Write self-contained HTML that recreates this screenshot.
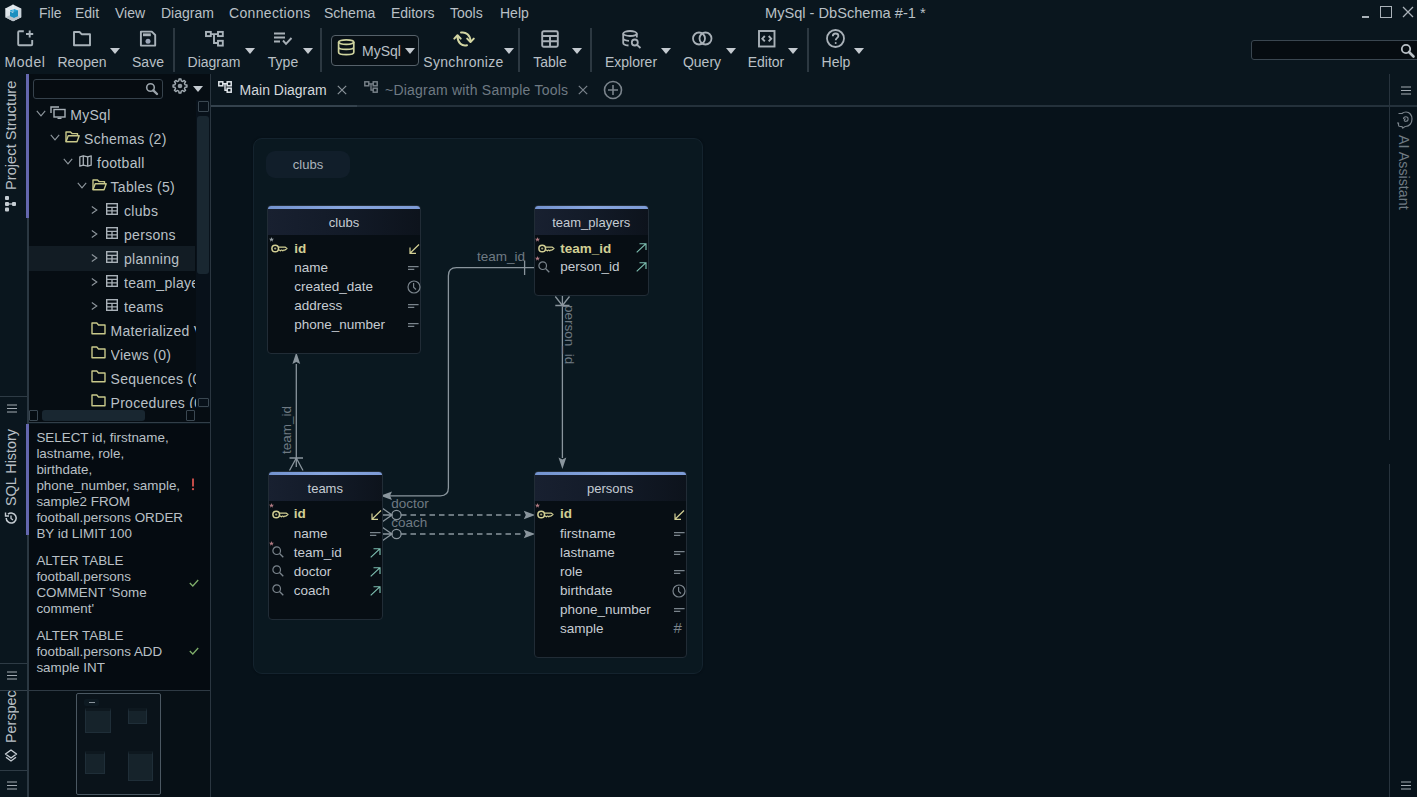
<!DOCTYPE html>
<html><head><meta charset="utf-8">
<style>
*{margin:0;padding:0;box-sizing:border-box}
html,body{width:1417px;height:797px;overflow:hidden;background:#0a161e;font-family:"Liberation Sans",sans-serif;color:#b9c0c6}
.a{position:absolute;white-space:nowrap}
svg{position:absolute;overflow:visible}
.mi{font-size:14px;top:4.5px;color:#b9c0c6}
.tl{font-size:14px;top:54px;line-height:16px;color:#b9c0c6}
.dd{position:absolute;width:0;height:0;border-left:5px solid transparent;border-right:5px solid transparent;border-top:6px solid #c4cad0}
.sep{position:absolute;width:1.8px;background:#2c3841;top:28px;height:44px}
</style></head><body>
<div id="root" style="position:absolute;left:0;top:0;width:1417px;height:797px">

<!-- MENU BAR -->
<svg style="left:0;top:0" width="26" height="25" viewBox="0 0 26 25">
<path d="M13 4.6L21.2 8.6V17.2L13 21.2L5.3 17.2V8.6Z" fill="#dfe5ea"/>
<path d="M13 12.6L21.2 8.6V17.2L13 21.2Z" fill="#c9d3db"/>
<path d="M5.3 17.2L13 21.2L21.2 17.2L13 14Z" fill="#b9c2c9"/>
<path d="M10 10.5L14.2 9L18 10.5V16L14 17.8L10 16Z" fill="#27a4d6"/>
<path d="M10 10.5L14.2 12L18 10.5V16L14 17.8L10 16Z" fill="#1c8fbf"/>
<path d="M13 4.6V12.6M5.3 8.6L13 12.6" stroke="#f4f7fa" stroke-width="0.6"/>
</svg>
<div class="a mi" style="left:39px">File</div>
<div class="a mi" style="left:75px">Edit</div>
<div class="a mi" style="left:115px">View</div>
<div class="a mi" style="left:161px">Diagram</div>
<div class="a mi" style="left:229px;letter-spacing:0.35px">Connections</div>
<div class="a mi" style="left:324px">Schema</div>
<div class="a mi" style="left:391px">Editors</div>
<div class="a mi" style="left:450px">Tools</div>
<div class="a mi" style="left:500px">Help</div>
<div class="a mi" style="left:765px;font-size:14.6px;top:4.6px">MySql - DbSchema #-1 *</div>
<!-- window controls -->
<div class="a" style="left:1362px;top:16px;width:7px;height:1.5px;background:#aab2b9"></div>
<div class="a" style="left:1380px;top:6px;width:12px;height:12px;border:1.5px solid #aab2b9"></div>
<svg style="left:1402px;top:6px" width="12" height="12"><path d="M1 1L11 11M11 1L1 11" stroke="#aab2b9" stroke-width="1.3"/></svg>

<!-- TOOLBAR -->
<div class="a tl" style="left:-25px;width:100px;text-align:center;letter-spacing:0.6px">Model</div>
<div class="a tl" style="left:32px;width:100px;text-align:center">Reopen</div>
<div class="a tl" style="left:98px;width:100px;text-align:center">Save</div>
<div class="a tl" style="left:164px;width:100px;text-align:center">Diagram</div>
<div class="a tl" style="left:233px;width:100px;text-align:center">Type</div>
<div class="a tl" style="left:413.5px;width:100px;text-align:center;letter-spacing:0.3px">Synchronize</div>
<div class="a tl" style="left:500px;width:100px;text-align:center">Table</div>
<div class="a tl" style="left:581px;width:100px;text-align:center">Explorer</div>
<div class="a tl" style="left:652px;width:100px;text-align:center">Query</div>
<div class="a tl" style="left:716px;width:100px;text-align:center">Editor</div>
<div class="a tl" style="left:786px;width:100px;text-align:center">Help</div>
<div class="dd" style="left:110.3px;top:48px;border-left-width:5px;border-right-width:5px"></div>
<div class="dd" style="left:244.5px;top:48px;border-left-width:5px;border-right-width:5px"></div>
<div class="dd" style="left:302.5px;top:48px;border-left-width:5px;border-right-width:5px"></div>
<div class="dd" style="left:503.8px;top:48px;border-left-width:5px;border-right-width:5px"></div>
<div class="dd" style="left:571.5px;top:48px;border-left-width:5px;border-right-width:5px"></div>
<div class="dd" style="left:661px;top:48px;border-left-width:5px;border-right-width:5px"></div>
<div class="dd" style="left:725.5px;top:48px;border-left-width:5px;border-right-width:5px"></div>
<div class="dd" style="left:788.3px;top:48px;border-left-width:5px;border-right-width:5px"></div>
<div class="dd" style="left:853.8px;top:48px;border-left-width:5px;border-right-width:5px"></div>
<div class="sep" style="left:173.2px"></div>
<div class="sep" style="left:320.4px"></div>
<div class="sep" style="left:518.1px"></div>
<div class="sep" style="left:590.1px"></div>
<div class="sep" style="left:806.8px"></div>
<!-- model icon -->
<svg style="left:16px;top:29px" width="19" height="19" viewBox="0 0 19 19"><path d="M7.8 2.2H3.2Q2.2 2.2 2.2 3.2V15.2Q2.2 16.2 3.2 16.2H15.2Q16.2 16.2 16.2 15.2V11" fill="none" stroke="#a9b3ba" stroke-width="1.9"/><path d="M13.7 1.4V8.4M10 5H17.2" stroke="#a9b3ba" stroke-width="1.9"/></svg>
<!-- reopen folder -->
<svg style="left:72px;top:30px" width="20" height="17" viewBox="0 0 20 17"><path d="M2 2H7.5L9.6 4.2H18V15.2H2Z" fill="none" stroke="#a9b3ba" stroke-width="1.9" stroke-linejoin="round"/></svg>
<!-- save -->
<svg style="left:139px;top:30px" width="18" height="17" viewBox="0 0 18 17"><path d="M1.9 1.6H12.8L16.2 5V15.6H1.9Z" fill="none" stroke="#a9b3ba" stroke-width="1.9" stroke-linejoin="round"/><rect x="4" y="3.4" width="7.8" height="2.8" fill="#a9b3ba"/><circle cx="9" cy="11.2" r="2.5" fill="#9ba6b8"/></svg>
<!-- diagram -->
<svg style="left:204px;top:30px" width="20" height="18" viewBox="0 0 20 18"><rect x="2" y="1.9" width="4.8" height="4.2" fill="none" stroke="#a9b3ba" stroke-width="1.9"/><rect x="14" y="1.9" width="4.8" height="4.2" fill="none" stroke="#a9b3ba" stroke-width="1.9"/><rect x="14" y="10.8" width="4.8" height="4.8" fill="none" stroke="#a9b3ba" stroke-width="1.9"/><path d="M6.8 4.1H14M10 4.1V13H14" fill="none" stroke="#a9b3ba" stroke-width="1.9"/></svg>
<!-- type -->
<svg style="left:273px;top:32px" width="20" height="14" viewBox="0 0 20 14"><path d="M1 1.5H12M1 5.5H12M1 9.5H7" stroke="#a9b1b8" stroke-width="1.9"/><path d="M10 8.5L13 11.8L18.5 6" fill="none" stroke="#a9b1b8" stroke-width="1.9"/></svg>
<!-- mysql combo -->
<div class="a" style="left:331px;top:35px;width:88px;height:31px;border:1.5px solid #56616a;border-radius:4px;background:#081016"></div>
<svg style="left:337px;top:39px" width="19" height="17" viewBox="0 0 19 17"><ellipse cx="9.2" cy="3.1" rx="7.6" ry="2.3" fill="none" stroke="#cfd39e" stroke-width="1.7"/><path d="M1.6 3.1V13.2C1.6 14.6 5 15.6 9.2 15.6S16.8 14.6 16.8 13.2V3.1M1.6 8C1.6 9.4 5 10.4 9.2 10.4S16.8 9.4 16.8 8" fill="none" stroke="#cfd39e" stroke-width="1.7"/></svg>
<div class="a" style="left:362px;top:42.5px;font-size:14px;line-height:16px;color:#b9c0c6">MySql</div>
<div class="dd" style="left:405px;top:48px;border-left-width:5px;border-right-width:5px"></div>
<!-- sync -->
<svg style="left:453px;top:30px" width="22" height="18" viewBox="0 0 22 18"><path d="M8 2.6C13 1.6 17.3 5 17.5 11.2M14 15.2C9 16.4 4.6 13 4.5 6.2" fill="none" stroke="#d3d6a3" stroke-width="2" stroke-linecap="round"/><path d="M14.2 8.6L17.5 12L20.8 8.6M1.3 8.6L4.5 5.2L7.7 8.6" fill="none" stroke="#d3d6a3" stroke-width="2" stroke-linecap="round" stroke-linejoin="round"/></svg>
<!-- table -->
<svg style="left:541px;top:30px" width="18" height="18" viewBox="0 0 18 18"><rect x="1.2" y="1.2" width="15.6" height="15.6" rx="1.5" fill="none" stroke="#a9b1b8" stroke-width="1.9"/><path d="M1.2 6H16.8M1.2 11.3H16.8M9 6V16.8" stroke="#a9b1b8" stroke-width="1.9"/></svg>
<!-- explorer -->
<svg style="left:622px;top:30px" width="20" height="19" viewBox="0 0 20 19"><ellipse cx="8" cy="3.5" rx="6.8" ry="2.5" fill="none" stroke="#a9b1b8" stroke-width="1.8"/><path d="M1.2 3.5V13C1.2 14.3 3.5 15.3 6.5 15.5M1.2 8.3C1.2 9.6 3.5 10.6 7 10.8M14.8 3.5V7.5" fill="none" stroke="#a9b1b8" stroke-width="1.8"/><circle cx="12.8" cy="12.5" r="3" fill="none" stroke="#a9b1b8" stroke-width="1.8"/><path d="M15 14.8L18.5 18" stroke="#a9b1b8" stroke-width="1.8"/></svg>
<!-- query -->
<svg style="left:692px;top:31px" width="21" height="15" viewBox="0 0 21 15"><circle cx="7" cy="7.5" r="6" fill="none" stroke="#a9b1b8" stroke-width="1.8"/><circle cx="13.5" cy="7.5" r="6" fill="none" stroke="#a9b1b8" stroke-width="1.8"/></svg>
<!-- editor -->
<svg style="left:758px;top:30px" width="18" height="18" viewBox="0 0 18 18"><rect x="1" y="1" width="15.5" height="15.5" fill="none" stroke="#a9b1b8" stroke-width="1.9"/><path d="M6.8 6L4.3 8.7L6.8 11.4M10.7 6L13.2 8.7L10.7 11.4" fill="none" stroke="#a9b1b8" stroke-width="1.9"/></svg>
<!-- help -->
<svg style="left:826px;top:29px" width="20" height="19" viewBox="0 0 20 19"><circle cx="9.5" cy="9.5" r="8.5" fill="none" stroke="#a9b1b8" stroke-width="1.8"/><path d="M6.8 7.2C6.8 5.5 8 4.5 9.6 4.5C11.2 4.5 12.4 5.5 12.4 7C12.4 8.8 9.7 9 9.7 11.3" fill="none" stroke="#a9b1b8" stroke-width="1.8"/><circle cx="9.7" cy="14" r="1" fill="#a9b1b8"/></svg>
<!-- search field -->
<div class="a" style="left:1251px;top:40px;width:170px;height:20px;border:1.3px solid #3a4650;border-radius:3px;background:#060c11"></div>
<svg style="left:1400px;top:43px" width="16" height="15" viewBox="0 0 16 15"><circle cx="6" cy="6" r="4.2" fill="none" stroke="#b9c0c6" stroke-width="1.8"/><path d="M9 9L13.5 13.5" stroke="#b9c0c6" stroke-width="2.6" stroke-linecap="round"/></svg>
<!-- CANVAS -->
<div class="a" style="left:211px;top:106.5px;width:1206px;height:691px;background:#07121a"></div>
<div class="a" style="left:252.5px;top:137.5px;width:450px;height:536px;border-radius:9px;background:#0a1820;border:1.5px solid #14232e;box-shadow:0 0 2px #060e14"></div>
<div class="a" style="left:266px;top:151px;width:84px;height:27px;border-radius:9px;background:#111e2a;text-align:center;font-size:13px;line-height:27px;color:#aab3bb">clubs</div>
<svg style="left:0;top:0" width="1417" height="797" viewBox="0 0 1417 797">
<g fill="none" stroke="#8a959d" stroke-width="1.3">
<path d="M296.3 364V467"/>
<path d="M289.5 458H303M296.3 458L289.5 470.5M296.3 458L303 470.5"/>
<path d="M534 267.7H456.4Q448.4 267.7 448.4 275.7V487.8Q448.4 495.8 440.4 495.8H390"/>
<path d="M524.6 260.5V275"/>
<path d="M562.4 296V458"/>
<path d="M555.3 305.5H569.5M562.4 305.5L555.3 296.5M562.4 305.5L569.5 296.5"/>
<path d="M382 515H392M382 508L392 515L382 522M382 534H392M382 527L392 534L382 541"/>
<circle cx="396.5" cy="515" r="4.6"/>
<circle cx="396.5" cy="534" r="4.6"/>
<path d="M401 515H524" stroke-dasharray="5.5 4" />
<path d="M401 534H524" stroke-dasharray="5.5 4" />
</g>
<g fill="#8a959d">
<path d="M296.3 352.3L292.4 364L296.3 362L300.2 364Z"/>
<path d="M380.4 495.8L392 491.6L390 495.8L392 500Z"/>
<path d="M562.4 469L558.5 457.5L562.4 459.5L566.3 457.5Z"/>
<path d="M535.2 515L523.8 510.8L525.8 515L523.8 519.2Z"/>
<path d="M535.2 534L523.8 529.8L525.8 534L523.8 538.2Z"/>
</g>
</svg>
<div class="a" style="left:477px;top:248.5px;font-size:13.5px;line-height:16px;color:#6f7a83">team_id</div>
<div class="a" style="left:391.2px;top:496px;font-size:13.5px;line-height:16px;color:#6f7a83">doctor</div>
<div class="a" style="left:391.2px;top:515px;font-size:13.5px;line-height:16px;color:#6f7a83">coach</div>
<div class="a" style="left:279px;top:454px;width:60px;height:16px;transform-origin:0 0;transform:rotate(-90deg);font-size:13.5px;line-height:16px;color:#6f7a83">team_id</div>
<div class="a" style="left:577px;top:305px;width:70px;height:16px;transform-origin:0 0;transform:rotate(90deg);font-size:13.5px;line-height:16px;color:#6f7a83">person_id</div>
<div class="a" style="left:267px;top:204.5px;width:154px;height:149px;border-radius:4px;background:#070e14;border:1px solid #212c36;overflow:hidden">
<div style="position:absolute;left:0;top:0;width:100%;height:3px;background:linear-gradient(90deg,#7393cf,#88a6df 50%,#7d9bd6)"></div>
<div style="position:absolute;left:0;top:3px;width:100%;height:26.5px;background:linear-gradient(90deg,#182030,#121a27 55%,#0d131c);text-align:center;font-size:13px;line-height:27px;color:#c5ccd3">clubs</div>
</div>
<div class="a" style="left:534px;top:204.5px;width:114.5px;height:91.5px;border-radius:4px;background:#070e14;border:1px solid #212c36;overflow:hidden">
<div style="position:absolute;left:0;top:0;width:100%;height:3px;background:linear-gradient(90deg,#7393cf,#88a6df 50%,#7d9bd6)"></div>
<div style="position:absolute;left:0;top:3px;width:100%;height:26.5px;background:linear-gradient(90deg,#182030,#121a27 55%,#0d131c);text-align:center;font-size:13px;line-height:27px;color:#c5ccd3">team_players</div>
</div>
<div class="a" style="left:268px;top:470.5px;width:114.5px;height:149.3px;border-radius:4px;background:#070e14;border:1px solid #212c36;overflow:hidden">
<div style="position:absolute;left:0;top:0;width:100%;height:3px;background:linear-gradient(90deg,#7393cf,#88a6df 50%,#7d9bd6)"></div>
<div style="position:absolute;left:0;top:3px;width:100%;height:26.5px;background:linear-gradient(90deg,#182030,#121a27 55%,#0d131c);text-align:center;font-size:13px;line-height:27px;color:#c5ccd3">teams</div>
</div>
<div class="a" style="left:533.7px;top:470.5px;width:153px;height:187.5px;border-radius:4px;background:#070e14;border:1px solid #212c36;overflow:hidden">
<div style="position:absolute;left:0;top:0;width:100%;height:3px;background:linear-gradient(90deg,#7393cf,#88a6df 50%,#7d9bd6)"></div>
<div style="position:absolute;left:0;top:3px;width:100%;height:26.5px;background:linear-gradient(90deg,#182030,#121a27 55%,#0d131c);text-align:center;font-size:13px;line-height:27px;color:#c5ccd3">persons</div>
</div>
<svg style="left:268.5px;top:237px" width="5" height="5" viewBox="0 0 5 5"><path d="M2.5 0L3.1 1.8H5L3.5 2.9L4.1 4.8L2.5 3.6L0.9 4.8L1.5 2.9L0 1.8H1.9Z" fill="#9aa2a8"/></svg>
<svg style="left:271.0px;top:244px" width="17" height="9" viewBox="0 0 17 9"><circle cx="4.2" cy="4.5" r="3.3" fill="none" stroke="#d2cf94" stroke-width="1.5"/><circle cx="4.2" cy="4.5" r="1.1" fill="#d2cf94" opacity="0.8"/><path d="M7.4 3.1H14L16 4.6L14 6.1H12.6L11.8 6.9L11 6.1H10.2L9.4 6.9L8.6 6.1H7.4" fill="none" stroke="#d2cf94" stroke-width="1.2" stroke-linejoin="round"/></svg>
<div class="a" style="left:294.2px;top:240.7px;font-size:13.5px;line-height:16px;color:#d2cf94;font-weight:bold;">id</div>
<svg style="left:408.5px;top:243.5px" width="11" height="10" viewBox="0 0 11 10"><path d="M10 0.5L1 9.3M1 3.5V9.3H7" fill="none" stroke="#d2cf94" stroke-width="1.2"/></svg>
<div class="a" style="left:294.2px;top:259.6px;font-size:13.5px;line-height:16px;color:#c6ccd2;">name</div>
<svg style="left:408.0px;top:265.5px" width="11" height="4" viewBox="0 0 11 4"><path d="M0 0.6H10.6M0 3.4H6.3" stroke="#7a848c" stroke-width="1.1"/></svg>
<div class="a" style="left:294.2px;top:278.6px;font-size:13.5px;line-height:16px;color:#c6ccd2;">created_date</div>
<svg style="left:406.5px;top:279.5px" width="14" height="14" viewBox="0 0 14 14"><circle cx="7" cy="7" r="6" fill="none" stroke="#7a848c" stroke-width="1.2"/><path d="M6.6 3V7.2L9 9.5" fill="none" stroke="#7a848c" stroke-width="1.2"/></svg>
<div class="a" style="left:294.2px;top:297.6px;font-size:13.5px;line-height:16px;color:#c6ccd2;">address</div>
<svg style="left:408.0px;top:303.5px" width="11" height="4" viewBox="0 0 11 4"><path d="M0 0.6H10.6M0 3.4H6.3" stroke="#7a848c" stroke-width="1.1"/></svg>
<div class="a" style="left:294.2px;top:316.6px;font-size:13.5px;line-height:16px;color:#c6ccd2;">phone_number</div>
<svg style="left:408.0px;top:322.5px" width="11" height="4" viewBox="0 0 11 4"><path d="M0 0.6H10.6M0 3.4H6.3" stroke="#7a848c" stroke-width="1.1"/></svg>
<svg style="left:535px;top:237px" width="5" height="5" viewBox="0 0 5 5"><path d="M2.5 0L3.1 1.8H5L3.5 2.9L4.1 4.8L2.5 3.6L0.9 4.8L1.5 2.9L0 1.8H1.9Z" fill="#b37c84"/></svg>
<svg style="left:537.5px;top:244px" width="17" height="9" viewBox="0 0 17 9"><circle cx="4.2" cy="4.5" r="3.3" fill="none" stroke="#d2cf94" stroke-width="1.5"/><circle cx="4.2" cy="4.5" r="1.1" fill="#d2cf94" opacity="0.8"/><path d="M7.4 3.1H14L16 4.6L14 6.1H12.6L11.8 6.9L11 6.1H10.2L9.4 6.9L8.6 6.1H7.4" fill="none" stroke="#d2cf94" stroke-width="1.2" stroke-linejoin="round"/></svg>
<div class="a" style="left:560.3px;top:240.6px;font-size:13.5px;line-height:16px;color:#d2cf94;font-weight:bold;">team_id</div>
<svg style="left:635.5px;top:243px" width="11" height="10" viewBox="0 0 11 10"><path d="M0.7 9.3L10 0.7M3.5 0.7H10V7" fill="none" stroke="#7ec0b2" stroke-width="1.15"/></svg>
<svg style="left:535px;top:256px" width="5" height="5" viewBox="0 0 5 5"><path d="M2.5 0L3.1 1.8H5L3.5 2.9L4.1 4.8L2.5 3.6L0.9 4.8L1.5 2.9L0 1.8H1.9Z" fill="#b37c84"/></svg>
<svg style="left:538px;top:261px" width="12" height="12" viewBox="0 0 12 12"><circle cx="4.7" cy="4.7" r="3.8" fill="none" stroke="#7a848c" stroke-width="1.2"/><path d="M7.5 7.5L11.3 11.3" stroke="#7a848c" stroke-width="1.3"/></svg>
<div class="a" style="left:560.3px;top:259.2px;font-size:13.5px;line-height:16px;color:#c6ccd2;">person_id</div>
<svg style="left:635.5px;top:262px" width="11" height="10" viewBox="0 0 11 10"><path d="M0.7 9.3L10 0.7M3.5 0.7H10V7" fill="none" stroke="#7ec0b2" stroke-width="1.15"/></svg>
<svg style="left:269px;top:503px" width="5" height="5" viewBox="0 0 5 5"><path d="M2.5 0L3.1 1.8H5L3.5 2.9L4.1 4.8L2.5 3.6L0.9 4.8L1.5 2.9L0 1.8H1.9Z" fill="#b37c84"/></svg>
<svg style="left:271.5px;top:510px" width="17" height="9" viewBox="0 0 17 9"><circle cx="4.2" cy="4.5" r="3.3" fill="none" stroke="#d2cf94" stroke-width="1.5"/><circle cx="4.2" cy="4.5" r="1.1" fill="#d2cf94" opacity="0.8"/><path d="M7.4 3.1H14L16 4.6L14 6.1H12.6L11.8 6.9L11 6.1H10.2L9.4 6.9L8.6 6.1H7.4" fill="none" stroke="#d2cf94" stroke-width="1.2" stroke-linejoin="round"/></svg>
<div class="a" style="left:293.7px;top:506.4px;font-size:13.5px;line-height:16px;color:#d2cf94;font-weight:bold;">id</div>
<svg style="left:370.5px;top:509.5px" width="11" height="10" viewBox="0 0 11 10"><path d="M10 0.5L1 9.3M1 3.5V9.3H7" fill="none" stroke="#d2cf94" stroke-width="1.2"/></svg>
<div class="a" style="left:293.7px;top:525.5px;font-size:13.5px;line-height:16px;color:#c6ccd2;">name</div>
<svg style="left:370.0px;top:531.5px" width="11" height="4" viewBox="0 0 11 4"><path d="M0 0.6H10.6M0 3.4H6.3" stroke="#7a848c" stroke-width="1.1"/></svg>
<svg style="left:269px;top:541px" width="5" height="5" viewBox="0 0 5 5"><path d="M2.5 0L3.1 1.8H5L3.5 2.9L4.1 4.8L2.5 3.6L0.9 4.8L1.5 2.9L0 1.8H1.9Z" fill="#b37c84"/></svg>
<svg style="left:272px;top:546px" width="12" height="12" viewBox="0 0 12 12"><circle cx="4.7" cy="4.7" r="3.8" fill="none" stroke="#7a848c" stroke-width="1.2"/><path d="M7.5 7.5L11.3 11.3" stroke="#7a848c" stroke-width="1.3"/></svg>
<div class="a" style="left:293.7px;top:544.5px;font-size:13.5px;line-height:16px;color:#c6ccd2;">team_id</div>
<svg style="left:369.5px;top:547.5px" width="11" height="10" viewBox="0 0 11 10"><path d="M0.7 9.3L10 0.7M3.5 0.7H10V7" fill="none" stroke="#7ec0b2" stroke-width="1.15"/></svg>
<svg style="left:272px;top:565px" width="12" height="12" viewBox="0 0 12 12"><circle cx="4.7" cy="4.7" r="3.8" fill="none" stroke="#7a848c" stroke-width="1.2"/><path d="M7.5 7.5L11.3 11.3" stroke="#7a848c" stroke-width="1.3"/></svg>
<div class="a" style="left:293.7px;top:563.5px;font-size:13.5px;line-height:16px;color:#c6ccd2;">doctor</div>
<svg style="left:369.5px;top:566.5px" width="11" height="10" viewBox="0 0 11 10"><path d="M0.7 9.3L10 0.7M3.5 0.7H10V7" fill="none" stroke="#7ec0b2" stroke-width="1.15"/></svg>
<svg style="left:272px;top:584px" width="12" height="12" viewBox="0 0 12 12"><circle cx="4.7" cy="4.7" r="3.8" fill="none" stroke="#7a848c" stroke-width="1.2"/><path d="M7.5 7.5L11.3 11.3" stroke="#7a848c" stroke-width="1.3"/></svg>
<div class="a" style="left:293.7px;top:582.5px;font-size:13.5px;line-height:16px;color:#c6ccd2;">coach</div>
<svg style="left:369.5px;top:585.5px" width="11" height="10" viewBox="0 0 11 10"><path d="M0.7 9.3L10 0.7M3.5 0.7H10V7" fill="none" stroke="#7ec0b2" stroke-width="1.15"/></svg>
<svg style="left:534.7px;top:503px" width="5" height="5" viewBox="0 0 5 5"><path d="M2.5 0L3.1 1.8H5L3.5 2.9L4.1 4.8L2.5 3.6L0.9 4.8L1.5 2.9L0 1.8H1.9Z" fill="#b37c84"/></svg>
<svg style="left:537.2px;top:510px" width="17" height="9" viewBox="0 0 17 9"><circle cx="4.2" cy="4.5" r="3.3" fill="none" stroke="#d2cf94" stroke-width="1.5"/><circle cx="4.2" cy="4.5" r="1.1" fill="#d2cf94" opacity="0.8"/><path d="M7.4 3.1H14L16 4.6L14 6.1H12.6L11.8 6.9L11 6.1H10.2L9.4 6.9L8.6 6.1H7.4" fill="none" stroke="#d2cf94" stroke-width="1.2" stroke-linejoin="round"/></svg>
<div class="a" style="left:560.0px;top:506.4px;font-size:13.5px;line-height:16px;color:#d2cf94;font-weight:bold;">id</div>
<svg style="left:674.2px;top:509.5px" width="11" height="10" viewBox="0 0 11 10"><path d="M10 0.5L1 9.3M1 3.5V9.3H7" fill="none" stroke="#d2cf94" stroke-width="1.2"/></svg>
<div class="a" style="left:560.0px;top:525.5px;font-size:13.5px;line-height:16px;color:#c6ccd2;">firstname</div>
<svg style="left:673.7px;top:531.5px" width="11" height="4" viewBox="0 0 11 4"><path d="M0 0.6H10.6M0 3.4H6.3" stroke="#7a848c" stroke-width="1.1"/></svg>
<div class="a" style="left:560.0px;top:544.5px;font-size:13.5px;line-height:16px;color:#c6ccd2;">lastname</div>
<svg style="left:673.7px;top:550.5px" width="11" height="4" viewBox="0 0 11 4"><path d="M0 0.6H10.6M0 3.4H6.3" stroke="#7a848c" stroke-width="1.1"/></svg>
<div class="a" style="left:560.0px;top:563.5px;font-size:13.5px;line-height:16px;color:#c6ccd2;">role</div>
<svg style="left:673.7px;top:569.5px" width="11" height="4" viewBox="0 0 11 4"><path d="M0 0.6H10.6M0 3.4H6.3" stroke="#7a848c" stroke-width="1.1"/></svg>
<div class="a" style="left:560.0px;top:582.5px;font-size:13.5px;line-height:16px;color:#c6ccd2;">birthdate</div>
<svg style="left:672.2px;top:583.5px" width="14" height="14" viewBox="0 0 14 14"><circle cx="7" cy="7" r="6" fill="none" stroke="#7a848c" stroke-width="1.2"/><path d="M6.6 3V7.2L9 9.5" fill="none" stroke="#7a848c" stroke-width="1.2"/></svg>
<div class="a" style="left:560.0px;top:601.5px;font-size:13.5px;line-height:16px;color:#c6ccd2;">phone_number</div>
<svg style="left:673.7px;top:607.5px" width="11" height="4" viewBox="0 0 11 4"><path d="M0 0.6H10.6M0 3.4H6.3" stroke="#7a848c" stroke-width="1.1"/></svg>
<div class="a" style="left:560.0px;top:620.5px;font-size:13.5px;line-height:16px;color:#c6ccd2;">sample</div>
<div class="a" style="left:673.5px;top:619.5px;font-size:15px;line-height:16px;color:#7a848c">#</div>
<!-- TAB BAR -->
<svg style="left:218px;top:81px" width="14" height="12" viewBox="0 0 14 12"><rect x="0.8" y="0.8" width="4" height="4" fill="none" stroke="#e0e5ea" stroke-width="1.5"/><rect x="9.2" y="0.8" width="4" height="4" fill="none" stroke="#e0e5ea" stroke-width="1.5"/><rect x="9.2" y="7.2" width="4" height="4" fill="none" stroke="#e0e5ea" stroke-width="1.5"/><path d="M4.8 2.8H9.2M7 2.8V9.2H9.2" fill="none" stroke="#e0e5ea" stroke-width="1.4"/></svg>
<div class="a" style="left:239.6px;top:81.8px;font-size:14px;line-height:16px;color:#d3d8dc;">Main Diagram</div>
<svg style="left:337px;top:85px" width="10" height="10" viewBox="0 0 10 10"><path d="M0.8 0.8L9.2 9.2M9.2 0.8L0.8 9.2" stroke="#8a939a" stroke-width="1.2"/></svg>
<svg style="left:364px;top:81px" width="14" height="12" viewBox="0 0 14 12"><rect x="0.8" y="0.8" width="4" height="4" fill="none" stroke="#7b848c" stroke-width="1.4"/><rect x="9.2" y="0.8" width="4" height="4" fill="none" stroke="#7b848c" stroke-width="1.4"/><rect x="9.2" y="7.2" width="4" height="4" fill="none" stroke="#7b848c" stroke-width="1.4"/><path d="M4.8 2.8H9.2M7 2.8V9.2H9.2" fill="none" stroke="#7b848c" stroke-width="1.3"/></svg>
<div class="a" style="left:385px;top:81.8px;font-size:14px;line-height:16px;color:#6f7a83;letter-spacing:0.22px">~Diagram with Sample Tools</div>
<svg style="left:578px;top:85px" width="10" height="10" viewBox="0 0 10 10"><path d="M0.8 0.8L9.2 9.2M9.2 0.8L0.8 9.2" stroke="#7b848c" stroke-width="1.2"/></svg>
<svg style="left:603px;top:80px" width="20" height="20" viewBox="0 0 20 20"><circle cx="10" cy="10" r="8.5" fill="none" stroke="#7b848c" stroke-width="1.6"/><path d="M10 5V15M5 10H15" stroke="#7b848c" stroke-width="1.6"/></svg>
<div class="a" style="left:211px;top:105px;width:1206px;height:1.5px;background:#24313b"></div>
<div class="a" style="left:211px;top:105px;width:146px;height:1.5px;background:#34424d"></div>
<div class="a" style="left:1389px;top:74px;width:1px;height:366px;background:#27333d"></div>
<div class="a" style="left:1389px;top:464px;width:1px;height:333px;background:#27333d"></div>
<svg style="left:1401px;top:86px" width="10" height="9" viewBox="0 0 10 9"><path d="M0 1H10M0 4.5H10M0 8H10" stroke="#a3abb2" stroke-width="1.15"/></svg>
<svg style="left:1401px;top:781px" width="10" height="9" viewBox="0 0 10 9"><path d="M0 1H10M0 4.5H10M0 8H10" stroke="#a3abb2" stroke-width="1.15"/></svg>
<div class="a" style="left:1398px;top:135px;width:100px;height:16px;transform-origin:0 0;transform:rotate(90deg) translate(0,-14px);font-size:14.3px;line-height:16px;color:#6f7a83">AI Assistant</div>
<svg style="left:1397px;top:111px" width="14" height="18" viewBox="0 0 14 18"><g transform="rotate(90 7 9)"><path d="M0.5 14.5V11C-0.5 10 -1 8.5 -1 7C-1 3.5 2 1 6 1C10 1 13.5 3.5 13.5 7.5C13.5 8.3 14.5 9.5 15 10.5L13.5 11V13C13.5 14 12.8 14.5 12 14.5H10V16" fill="none" stroke="#7b848c" stroke-width="1.2"/><path d="M6 9.5A2.3 2.3 0 1 1 8.3 7.2A1.2 1.2 0 1 1 6 7.2" fill="none" stroke="#7b848c" stroke-width="1.1"/></g></svg>
<!-- LEFT STRIP -->
<div class="a" style="left:27px;top:74px;width:1px;height:723px;background:#1f2a33"></div>
<div class="a" style="left:210px;top:74px;width:1px;height:723px;background:#2a3640"></div>
<div class="a" style="left:26.3px;top:74px;width:2.6px;height:144px;background:#6467ae"></div>
<div class="a" style="left:26.3px;top:424px;width:2.6px;height:111px;background:#6467ae"></div>
<div class="a" style="left:3.3px;top:189.5px;width:120px;height:16px;transform-origin:0 0;transform:rotate(-90deg);font-size:14.7px;line-height:16px;color:#b9c0c6">Project Structure</div>
<svg style="left:4px;top:195px" width="14" height="17" viewBox="0 0 14 17"><rect x="1" y="1" width="4" height="4" rx="1" fill="#c5ccd2"/><rect x="1" y="7" width="4" height="4" rx="1" fill="#c5ccd2"/><rect x="1" y="12.5" width="4" height="4" rx="1" fill="#c5ccd2"/><rect x="8" y="7" width="4" height="4" rx="1" fill="#c5ccd2"/><path d="M5 9H8" stroke="#c5ccd2" stroke-width="1.2"/></svg>
<div class="a" style="left:0;top:396px;width:27px;height:1.3px;background:#2e3b45"></div>
<svg style="left:7px;top:404px" width="10" height="9" viewBox="0 0 10 9"><path d="M0 1H10M0 4.5H10M0 8H10" stroke="#a3abb2" stroke-width="1.15"/></svg>
<div class="a" style="left:3.3px;top:506px;width:120px;height:16px;transform-origin:0 0;transform:rotate(-90deg);font-size:14.4px;line-height:16px;color:#b9c0c6">SQL History</div>
<svg style="left:4px;top:511px" width="14" height="14" viewBox="0 0 14 14"><path d="M2.2 7A5 5 0 1 0 4 3.2" fill="none" stroke="#c5ccd2" stroke-width="1.5"/><path d="M1.5 1.5V5H5" fill="none" stroke="#c5ccd2" stroke-width="1.4"/><path d="M7 4.5V7.5L9 9" fill="none" stroke="#c5ccd2" stroke-width="1.3"/></svg>
<div class="a" style="left:0;top:663px;width:27px;height:1.3px;background:#2e3b45"></div>
<svg style="left:7px;top:671px" width="10" height="9" viewBox="0 0 10 9"><path d="M0 1H10M0 4.5H10M0 8H10" stroke="#a3abb2" stroke-width="1.15"/></svg>
<div class="a" style="left:0;top:689.5px;width:27px;height:1.5px;background:#34414b"></div>
<div class="a" style="left:3.3px;top:743px;width:52px;height:16px;overflow:hidden;transform-origin:0 0;transform:rotate(-90deg);font-size:14.4px;line-height:16px;color:#b9c0c6">Perspec</div>
<svg style="left:4px;top:749px" width="14" height="14" viewBox="0 0 14 14"><path d="M7 1L12.5 5L7 9L1.5 5Z" fill="none" stroke="#c5ccd2" stroke-width="1.4" stroke-linejoin="round"/><path d="M2 8.3L7 12L12 8.3" fill="none" stroke="#c5ccd2" stroke-width="1.4"/></svg>
<div class="a" style="left:0;top:770px;width:27px;height:1.3px;background:#2e3b45"></div>
<svg style="left:7px;top:781px" width="10" height="9" viewBox="0 0 10 9"><path d="M0 1H10M0 4.5H10M0 8H10" stroke="#a3abb2" stroke-width="1.15"/></svg>
<!-- TREE PANEL -->
<div class="a" style="left:28px;top:74px;width:182px;height:349px;background:#060d13"></div>
<div class="a" style="left:33px;top:79.3px;width:130px;height:19.5px;border:1.3px solid #36424c;border-radius:3px;background:#060c11"></div>
<svg style="left:145px;top:82px" width="14" height="14" viewBox="0 0 14 14"><circle cx="5.5" cy="5.5" r="3.8" fill="none" stroke="#9aa3aa" stroke-width="1.6"/><path d="M8.3 8.3L12 12" stroke="#9aa3aa" stroke-width="2.4" stroke-linecap="round"/></svg>
<svg style="left:172px;top:78.3px" width="16" height="16" viewBox="0 0 16 16"><path d="M13.06 6.79 L14.93 7.01 L14.93 8.99 L13.06 9.21 L12.43 10.72 L13.60 12.20 L12.20 13.60 L10.72 12.43 L9.21 13.06 L8.99 14.93 L7.01 14.93 L6.79 13.06 L5.28 12.43 L3.80 13.60 L2.40 12.20 L3.57 10.72 L2.94 9.21 L1.07 8.99 L1.07 7.01 L2.94 6.79 L3.57 5.28 L2.40 3.80 L3.80 2.40 L5.28 3.57 L6.79 2.94 L7.01 1.07 L8.99 1.07 L9.21 2.94 L10.72 3.57 L12.20 2.40 L13.60 3.80 L12.43 5.28Z" fill="none" stroke="#a3acb3" stroke-width="1.4" stroke-linejoin="round"/><circle cx="8" cy="8" r="2.3" fill="#8f989f"/></svg>
<div class="dd" style="left:192.5px;top:85.8px;border-left-width:5px;border-right-width:5px"></div>
<div class="a" style="left:28px;top:246px;width:167px;height:25px;background:#121c24"></div>
<svg style="left:36px;top:110px" width="10" height="7" viewBox="0 0 10 7"><path d="M0.8 0.8L5 5.8L9.2 0.8" fill="none" stroke="#8f979e" stroke-width="1.1"/></svg>
<svg style="left:50px;top:106px" width="16" height="13" viewBox="0 0 16 13"><path d="M1 7V1H9" fill="none" stroke="#a9b1b8" stroke-width="1.4"/><rect x="4" y="3.5" width="11" height="7.5" fill="none" stroke="#a9b1b8" stroke-width="1.4"/><path d="M7.5 12.3H11.5" stroke="#a9b1b8" stroke-width="1.4"/></svg>
<div class="a" style="left:70.2px;top:106.7px;font-size:14px;line-height:16px;color:#b9c0c6;letter-spacing:0.3px">MySql</div>
<svg style="left:50px;top:134px" width="10" height="7" viewBox="0 0 10 7"><path d="M0.8 0.8L5 5.8L9.2 0.8" fill="none" stroke="#8f979e" stroke-width="1.1"/></svg>
<svg style="left:64.5px;top:131px" width="15" height="12" viewBox="0 0 15 12"><path d="M1 10.8V1H5.5L7 2.6H12.5V4.6" fill="none" stroke="#c8c88a" stroke-width="1.4" stroke-linejoin="round"/><path d="M1 10.8L3.2 4.8H14.2L12 10.8Z" fill="none" stroke="#c8c88a" stroke-width="1.4" stroke-linejoin="round"/></svg>
<div class="a" style="left:84px;top:130.7px;font-size:14px;line-height:16px;color:#b9c0c6;letter-spacing:0.3px">Schemas (2)</div>
<svg style="left:63px;top:158px" width="10" height="7" viewBox="0 0 10 7"><path d="M0.8 0.8L5 5.8L9.2 0.8" fill="none" stroke="#8f979e" stroke-width="1.1"/></svg>
<svg style="left:78.5px;top:155px" width="13" height="12" viewBox="0 0 13 12"><path d="M0.8 1.8L4.3 0.8L8.7 1.8L12.2 0.8V10.2L8.7 11.2L4.3 10.2L0.8 11.2Z" fill="none" stroke="#a9b1b8" stroke-width="1.3" stroke-linejoin="round"/><path d="M4.3 0.8V10.2M8.7 1.8V11.2" stroke="#a9b1b8" stroke-width="1.3"/></svg>
<div class="a" style="left:97px;top:154.7px;font-size:14px;line-height:16px;color:#b9c0c6;letter-spacing:0.3px">football</div>
<svg style="left:76.5px;top:182px" width="10" height="7" viewBox="0 0 10 7"><path d="M0.8 0.8L5 5.8L9.2 0.8" fill="none" stroke="#8f979e" stroke-width="1.1"/></svg>
<svg style="left:91.5px;top:179px" width="15" height="12" viewBox="0 0 15 12"><path d="M1 10.8V1H5.5L7 2.6H12.5V4.6" fill="none" stroke="#c8c88a" stroke-width="1.4" stroke-linejoin="round"/><path d="M1 10.8L3.2 4.8H14.2L12 10.8Z" fill="none" stroke="#c8c88a" stroke-width="1.4" stroke-linejoin="round"/></svg>
<div class="a" style="left:110.5px;top:178.7px;font-size:14px;line-height:16px;color:#b9c0c6;letter-spacing:0.3px">Tables (5)</div>
<svg style="left:91px;top:206px" width="7" height="8" viewBox="0 0 7 8"><path d="M0.8 0.5L5.8 4L0.8 7.5" fill="none" stroke="#8f979e" stroke-width="1.1"/></svg>
<svg style="left:106px;top:203px" width="12" height="12" viewBox="0 0 12 12"><rect x="0.7" y="0.7" width="10.6" height="10.6" fill="none" stroke="#a9b1b8" stroke-width="1.4"/><path d="M0.7 4.3H11.3M0.7 7.8H11.3M6 4.3V11.3" stroke="#a9b1b8" stroke-width="1.3"/></svg>
<div class="a" style="left:124px;top:202.7px;width:71px;overflow:hidden;font-size:14px;line-height:16px;color:#b9c0c6;letter-spacing:0.3px">clubs</div>
<svg style="left:91px;top:230px" width="7" height="8" viewBox="0 0 7 8"><path d="M0.8 0.5L5.8 4L0.8 7.5" fill="none" stroke="#8f979e" stroke-width="1.1"/></svg>
<svg style="left:106px;top:227px" width="12" height="12" viewBox="0 0 12 12"><rect x="0.7" y="0.7" width="10.6" height="10.6" fill="none" stroke="#a9b1b8" stroke-width="1.4"/><path d="M0.7 4.3H11.3M0.7 7.8H11.3M6 4.3V11.3" stroke="#a9b1b8" stroke-width="1.3"/></svg>
<div class="a" style="left:124px;top:226.7px;width:71px;overflow:hidden;font-size:14px;line-height:16px;color:#b9c0c6;letter-spacing:0.3px">persons</div>
<svg style="left:91px;top:254px" width="7" height="8" viewBox="0 0 7 8"><path d="M0.8 0.5L5.8 4L0.8 7.5" fill="none" stroke="#8f979e" stroke-width="1.1"/></svg>
<svg style="left:106px;top:251px" width="12" height="12" viewBox="0 0 12 12"><rect x="0.7" y="0.7" width="10.6" height="10.6" fill="none" stroke="#a9b1b8" stroke-width="1.4"/><path d="M0.7 4.3H11.3M0.7 7.8H11.3M6 4.3V11.3" stroke="#a9b1b8" stroke-width="1.3"/></svg>
<div class="a" style="left:124px;top:250.7px;width:71px;overflow:hidden;font-size:14px;line-height:16px;color:#b9c0c6;letter-spacing:0.3px">planning</div>
<svg style="left:91px;top:278px" width="7" height="8" viewBox="0 0 7 8"><path d="M0.8 0.5L5.8 4L0.8 7.5" fill="none" stroke="#8f979e" stroke-width="1.1"/></svg>
<svg style="left:106px;top:275px" width="12" height="12" viewBox="0 0 12 12"><rect x="0.7" y="0.7" width="10.6" height="10.6" fill="none" stroke="#a9b1b8" stroke-width="1.4"/><path d="M0.7 4.3H11.3M0.7 7.8H11.3M6 4.3V11.3" stroke="#a9b1b8" stroke-width="1.3"/></svg>
<div class="a" style="left:124px;top:274.6px;width:71px;overflow:hidden;font-size:14px;line-height:16px;color:#b9c0c6;letter-spacing:0.3px">team_players</div>
<svg style="left:91px;top:302px" width="7" height="8" viewBox="0 0 7 8"><path d="M0.8 0.5L5.8 4L0.8 7.5" fill="none" stroke="#8f979e" stroke-width="1.1"/></svg>
<svg style="left:106px;top:299px" width="12" height="12" viewBox="0 0 12 12"><rect x="0.7" y="0.7" width="10.6" height="10.6" fill="none" stroke="#a9b1b8" stroke-width="1.4"/><path d="M0.7 4.3H11.3M0.7 7.8H11.3M6 4.3V11.3" stroke="#a9b1b8" stroke-width="1.3"/></svg>
<div class="a" style="left:124px;top:298.6px;width:71px;overflow:hidden;font-size:14px;line-height:16px;color:#b9c0c6;letter-spacing:0.3px">teams</div>
<svg style="left:91px;top:322px" width="15" height="13" viewBox="0 0 15 13"><path d="M1 1H5.8L7.5 3H14V11.8H1Z" fill="none" stroke="#c8c88a" stroke-width="1.4" stroke-linejoin="round"/></svg>
<div class="a" style="left:110.5px;top:322.6px;width:85px;overflow:hidden;font-size:14px;line-height:16px;color:#b9c0c6;letter-spacing:0.3px">Materialized Views (0)</div>
<svg style="left:91px;top:346px" width="15" height="13" viewBox="0 0 15 13"><path d="M1 1H5.8L7.5 3H14V11.8H1Z" fill="none" stroke="#c8c88a" stroke-width="1.4" stroke-linejoin="round"/></svg>
<div class="a" style="left:110.5px;top:346.6px;width:85px;overflow:hidden;font-size:14px;line-height:16px;color:#b9c0c6;letter-spacing:0.3px">Views (0)</div>
<svg style="left:91px;top:370px" width="15" height="13" viewBox="0 0 15 13"><path d="M1 1H5.8L7.5 3H14V11.8H1Z" fill="none" stroke="#c8c88a" stroke-width="1.4" stroke-linejoin="round"/></svg>
<div class="a" style="left:110.5px;top:370.6px;width:85px;overflow:hidden;font-size:14px;line-height:16px;color:#b9c0c6;letter-spacing:0.3px">Sequences (0)</div>
<svg style="left:91px;top:394px" width="15" height="13" viewBox="0 0 15 13"><path d="M1 1H5.8L7.5 3H14V11.8H1Z" fill="none" stroke="#c8c88a" stroke-width="1.4" stroke-linejoin="round"/></svg>
<div class="a" style="left:110.5px;top:394.6px;width:85px;overflow:hidden;font-size:14px;line-height:16px;color:#b9c0c6;letter-spacing:0.3px">Procedures (0)</div>
<div class="a" style="left:196px;top:100px;width:14px;height:308px;background:#08111a"></div>
<div class="a" style="left:197.5px;top:101px;width:11px;height:11px;border:1.3px solid #3a4751;border-radius:1px"></div>
<div class="a" style="left:197px;top:116px;width:12px;height:158px;background:#192731;border-radius:3px"></div>
<div class="a" style="left:197.5px;top:398px;width:11px;height:9px;border:1.3px solid #3a4751;border-radius:1px"></div>
<div class="a" style="left:28px;top:408px;width:182px;height:15px;background:#060d13"></div>
<div class="a" style="left:29px;top:410px;width:9px;height:11px;border:1.3px solid #3a4751;border-radius:1px"></div>
<div class="a" style="left:41.5px;top:410px;width:103px;height:11px;background:#192731;border-radius:3px"></div>
<div class="a" style="left:185.5px;top:410px;width:9px;height:11px;border:1.3px solid #3a4751;border-radius:1px"></div>
<div class="a" style="left:28px;top:422px;width:182px;height:1.3px;background:#323e48"></div>
<!-- SQL HISTORY -->
<div class="a" style="left:28px;top:424px;width:182px;height:266px;background:#050b11"></div>
<div class="a" style="left:36.4px;top:429.6px;font-size:13.4px;line-height:16px;color:#b9c0c6">SELECT id, firstname,</div>
<div class="a" style="left:36.4px;top:445.6px;font-size:13.4px;line-height:16px;color:#b9c0c6">lastname, role,</div>
<div class="a" style="left:36.4px;top:461.6px;font-size:13.4px;line-height:16px;color:#b9c0c6">birthdate,</div>
<div class="a" style="left:36.4px;top:477.6px;font-size:13.4px;line-height:16px;color:#b9c0c6">phone_number, sample,</div>
<div class="a" style="left:36.4px;top:493.6px;font-size:13.4px;line-height:16px;color:#b9c0c6">sample2 FROM</div>
<div class="a" style="left:36.4px;top:509.6px;font-size:13.4px;line-height:16px;color:#b9c0c6">football.persons ORDER</div>
<div class="a" style="left:36.4px;top:525.5px;font-size:13.4px;line-height:16px;color:#b9c0c6">BY id LIMIT 100</div>
<div class="a" style="left:36.4px;top:552.5px;font-size:13.4px;line-height:16px;color:#b9c0c6">ALTER TABLE</div>
<div class="a" style="left:36.4px;top:568.5px;font-size:13.4px;line-height:16px;color:#b9c0c6">football.persons</div>
<div class="a" style="left:36.4px;top:584.5px;font-size:13.4px;line-height:16px;color:#b9c0c6">COMMENT 'Some</div>
<div class="a" style="left:36.4px;top:600.5px;font-size:13.4px;line-height:16px;color:#b9c0c6">comment'</div>
<div class="a" style="left:36.4px;top:627.5px;font-size:13.4px;line-height:16px;color:#b9c0c6">ALTER TABLE</div>
<div class="a" style="left:36.4px;top:643.5px;font-size:13.4px;line-height:16px;color:#b9c0c6">football.persons ADD</div>
<div class="a" style="left:36.4px;top:659.5px;font-size:13.4px;line-height:16px;color:#b9c0c6">sample INT</div>
<svg style="left:191px;top:478px" width="4" height="13" viewBox="0 0 4 13"><path d="M2 0.5V8.5" stroke="#d9534f" stroke-width="1.8"/><circle cx="2" cy="11.2" r="1.1" fill="#d9534f"/></svg>
<svg style="left:189px;top:579px" width="10" height="8" viewBox="0 0 10 8"><path d="M0.8 4L3.8 7L9.2 1" fill="none" stroke="#7fae6a" stroke-width="1.3"/></svg>
<svg style="left:189px;top:647px" width="10" height="8" viewBox="0 0 10 8"><path d="M0.8 4L3.8 7L9.2 1" fill="none" stroke="#7fae6a" stroke-width="1.3"/></svg>
<!-- MINIMAP -->
<div class="a" style="left:28px;top:689.5px;width:182px;height:1.5px;background:#2e3a44"></div>
<div class="a" style="left:28px;top:691px;width:182px;height:106px;background:#071016"></div>
<div class="a" style="left:76.3px;top:692.5px;width:85px;height:102.5px;border:1.6px solid #4b5862;border-radius:2px;background:#0a131a"></div>
<div class="a" style="left:84px;top:699px;width:15px;height:7px;background:#0e1a22;border-radius:2px"></div><div class="a" style="left:89px;top:702px;width:6px;height:1px;background:#8a949c"></div>
<div class="a" style="left:85.3px;top:708px;width:25.5px;height:25px;background:#16232b;border:1px solid #1f2e38;border-top:3px solid #0e181f"></div>
<div class="a" style="left:128px;top:708px;width:19px;height:16px;background:#16232b;border:1px solid #1f2e38;border-top:3px solid #0e181f"></div>
<div class="a" style="left:85.3px;top:751.3px;width:20px;height:23px;background:#16232b;border:1px solid #1f2e38;border-top:3px solid #0e181f"></div>
<div class="a" style="left:128px;top:751.3px;width:25px;height:30px;background:#16232b;border:1px solid #1f2e38;border-top:3px solid #0e181f"></div>
<div class="a" style="left:27px;top:106px;width:1.8px;height:691px;background:#2b3842"></div>
<div class="a" style="left:26.3px;top:74px;width:2.6px;height:144px;background:#6467ae"></div>
<div class="a" style="left:26.3px;top:424px;width:2.6px;height:111px;background:#6467ae"></div>
</div>
</body></html>
